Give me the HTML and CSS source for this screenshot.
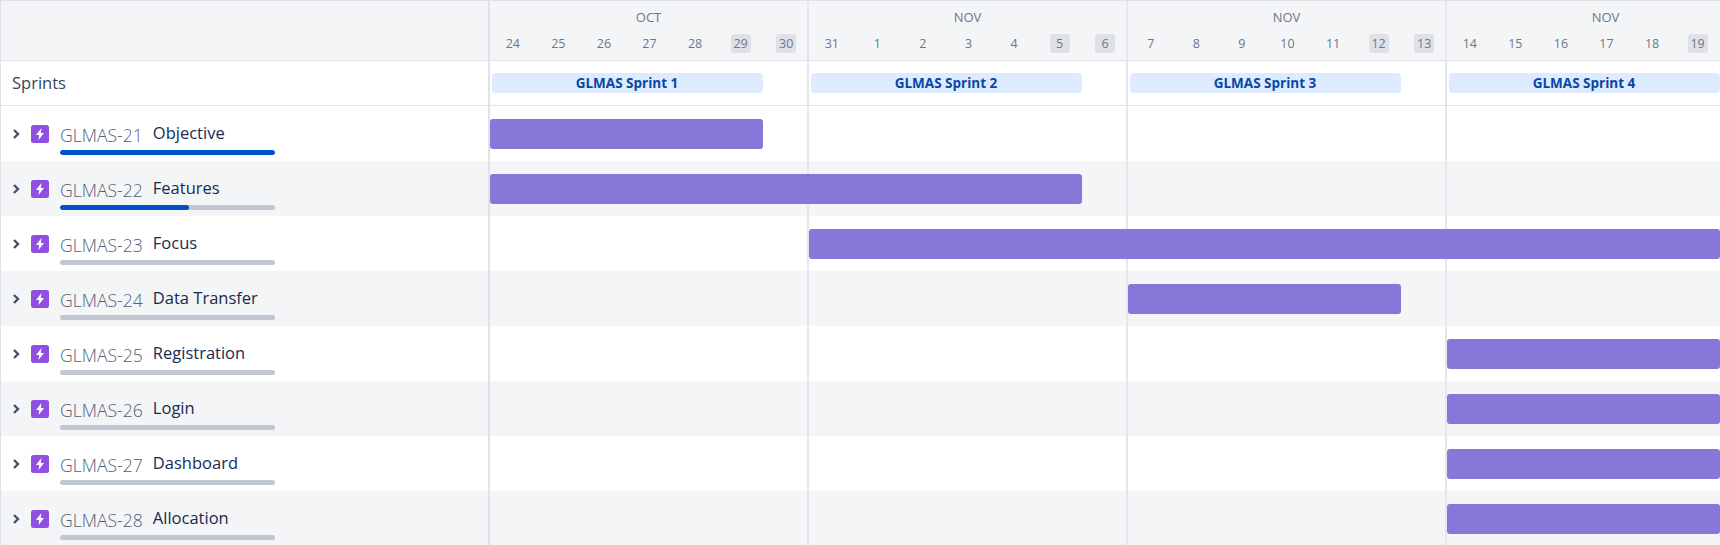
FILE: index.html
```html
<!DOCTYPE html>
<html lang="en">
<head>
<meta charset="utf-8">
<title>Timeline</title>
<link rel="stylesheet" href="styles.css">
</head>
<body>
<div class="board">
  <div class="head">
    <div class="side"></div>
    <div class="weeks">
      <div class="week"><div class="month">OCT</div><div class="days"><span>24</span><span>25</span><span>26</span><span>27</span><span>28</span><span class="off">29</span><span class="off">30</span></div></div>
      <div class="week"><div class="month">NOV</div><div class="days"><span>31</span><span>1</span><span>2</span><span>3</span><span>4</span><span class="off">5</span><span class="off">6</span></div></div>
      <div class="week"><div class="month">NOV</div><div class="days"><span>7</span><span>8</span><span>9</span><span>10</span><span>11</span><span class="off">12</span><span class="off">13</span></div></div>
      <div class="week"><div class="month">NOV</div><div class="days"><span>14</span><span>15</span><span>16</span><span>17</span><span>18</span><span class="off">19</span><span></span></div></div>
    </div>
  </div>
  <div class="sprints">
    <div class="side sprints-label">Sprints</div>
    <div class="sprint-track">
      <div class="sprint-cell"><div class="chip">GLMAS Sprint 1</div></div>
      <div class="sprint-cell"><div class="chip">GLMAS Sprint 2</div></div>
      <div class="sprint-cell"><div class="chip">GLMAS Sprint 3</div></div>
      <div class="sprint-cell"><div class="chip">GLMAS Sprint 4</div></div>
    </div>
  </div>

  <div class="row">
    <div class="side item">
      <svg class="chev" viewBox="0 0 8 12"><path d="M2 2l4 4-4 4"/></svg>
      <svg class="epic" viewBox="0 0 18 18"><rect width="18" height="18" rx="2.5"/><path d="M10.5 3L5 10h3.2L7.5 15 13 8H9.8z"/></svg>
      <div class="meta"><div class="labels"><span class="key">GLMAS-21</span><span class="name">Objective</span></div><div class="progress"><div class="fill" style="width:100%"></div></div></div>
    </div>
    <div class="track"><div class="bar" style="grid-column:1 / span 6"></div></div>
  </div>
  <div class="row alt">
    <div class="side item">
      <svg class="chev" viewBox="0 0 8 12"><path d="M2 2l4 4-4 4"/></svg>
      <svg class="epic" viewBox="0 0 18 18"><rect width="18" height="18" rx="2.5"/><path d="M10.5 3L5 10h3.2L7.5 15 13 8H9.8z"/></svg>
      <div class="meta"><div class="labels"><span class="key">GLMAS-22</span><span class="name">Features</span></div><div class="progress"><div class="fill" style="width:60%"></div></div></div>
    </div>
    <div class="track"><div class="bar" style="grid-column:1 / span 13"></div></div>
  </div>
  <div class="row">
    <div class="side item">
      <svg class="chev" viewBox="0 0 8 12"><path d="M2 2l4 4-4 4"/></svg>
      <svg class="epic" viewBox="0 0 18 18"><rect width="18" height="18" rx="2.5"/><path d="M10.5 3L5 10h3.2L7.5 15 13 8H9.8z"/></svg>
      <div class="meta"><div class="labels"><span class="key">GLMAS-23</span><span class="name">Focus</span></div><div class="progress"></div></div>
    </div>
    <div class="track"><div class="bar" style="grid-column:8 / span 20"></div></div>
  </div>
  <div class="row alt">
    <div class="side item">
      <svg class="chev" viewBox="0 0 8 12"><path d="M2 2l4 4-4 4"/></svg>
      <svg class="epic" viewBox="0 0 18 18"><rect width="18" height="18" rx="2.5"/><path d="M10.5 3L5 10h3.2L7.5 15 13 8H9.8z"/></svg>
      <div class="meta"><div class="labels"><span class="key">GLMAS-24</span><span class="name">Data Transfer</span></div><div class="progress"></div></div>
    </div>
    <div class="track"><div class="bar" style="grid-column:15 / span 6"></div></div>
  </div>
  <div class="row">
    <div class="side item">
      <svg class="chev" viewBox="0 0 8 12"><path d="M2 2l4 4-4 4"/></svg>
      <svg class="epic" viewBox="0 0 18 18"><rect width="18" height="18" rx="2.5"/><path d="M10.5 3L5 10h3.2L7.5 15 13 8H9.8z"/></svg>
      <div class="meta"><div class="labels"><span class="key">GLMAS-25</span><span class="name">Registration</span></div><div class="progress"></div></div>
    </div>
    <div class="track"><div class="bar" style="grid-column:22 / span 6"></div></div>
  </div>
  <div class="row alt">
    <div class="side item">
      <svg class="chev" viewBox="0 0 8 12"><path d="M2 2l4 4-4 4"/></svg>
      <svg class="epic" viewBox="0 0 18 18"><rect width="18" height="18" rx="2.5"/><path d="M10.5 3L5 10h3.2L7.5 15 13 8H9.8z"/></svg>
      <div class="meta"><div class="labels"><span class="key">GLMAS-26</span><span class="name">Login</span></div><div class="progress"></div></div>
    </div>
    <div class="track"><div class="bar" style="grid-column:22 / span 6"></div></div>
  </div>
  <div class="row">
    <div class="side item">
      <svg class="chev" viewBox="0 0 8 12"><path d="M2 2l4 4-4 4"/></svg>
      <svg class="epic" viewBox="0 0 18 18"><rect width="18" height="18" rx="2.5"/><path d="M10.5 3L5 10h3.2L7.5 15 13 8H9.8z"/></svg>
      <div class="meta"><div class="labels"><span class="key">GLMAS-27</span><span class="name">Dashboard</span></div><div class="progress"></div></div>
    </div>
    <div class="track"><div class="bar" style="grid-column:22 / span 6"></div></div>
  </div>
  <div class="row alt">
    <div class="side item">
      <svg class="chev" viewBox="0 0 8 12"><path d="M2 2l4 4-4 4"/></svg>
      <svg class="epic" viewBox="0 0 18 18"><rect width="18" height="18" rx="2.5"/><path d="M10.5 3L5 10h3.2L7.5 15 13 8H9.8z"/></svg>
      <div class="meta"><div class="labels"><span class="key">GLMAS-28</span><span class="name">Allocation</span></div><div class="progress"></div></div>
    </div>
    <div class="track"><div class="bar" style="grid-column:22 / span 6"></div></div>
  </div>
</div>
</body>
</html>
```

FILE: styles.css
```css
* { box-sizing: border-box; }
html, body { margin: 0; height: 100%; overflow: hidden; background: #fff; }
body { font-family: "Open Sans", "Noto Sans", sans-serif; color: #172b4d; }

.board {
  width: 1720px;
  height: 545px;
  overflow: hidden;
  border-top: 1px solid #dfe1e6;
  border-left: 1px solid #dfe1e6;
}
.side {
  flex: 0 0 489px;
  width: 489px;
  border-right: 2px solid #e1e2e8;
}
.head {
  display: flex;
  height: 59px;
  background: #f4f5f7;
}
.weeks { display: flex; flex: none; }
.week {
  flex: 0 0 319px;
  width: 319px;
  border-right: 2px solid #e6e7ec;
  text-align: center;
}
.month {
  height: 33px;
  padding-top: 7px;
  font-size: 13px;
  line-height: 18px;
  color: #6b778c;
}
.days { display: grid; grid-template-columns: repeat(7, 45.57px); margin-right: -2px; }
.days span {
  justify-self: center;
  width: 20px;
  height: 19px;
  border-radius: 3px;
  font-size: 12.5px;
  line-height: 19px;
  color: #6b778c;
}
.days .off { background: #dfe1e6; }
.sprints {
  display: flex;
  height: 46px;
  border-top: 1px solid #e1e2e8;
  border-bottom: 1px solid #e1e2e8;
}
.sprints-label {
  display: flex;
  align-items: center;
  padding: 0 0 2px 11px;
  font-size: 16.5px;
  color: #344563;
}
.sprint-track { display: flex; flex: none; }
.sprint-cell {
  flex: 0 0 319px;
  padding: 12px 0 0 1.5px;
  border-right: 2px solid #e6e7ec;
}
.chip {
  width: 271px;
  height: 20px;
  border-radius: 4px;
  background: #deebff;
  color: #0747a6;
  font-size: 13.5px;
  font-weight: 700;
  line-height: 20px;
  text-align: center;
}
.row { display: flex; height: 55px; background: #fff; }
.row.alt { background: #f4f5f7; }
.item {
  display: flex;
  align-items: flex-start;
  padding-left: 11px;
}
.chev { width: 8px; height: 12px; margin-top: 22px; fill: none; stroke: #42526e; stroke-width: 2.4; }
.epic { width: 18px; height: 18px; margin: 19px 0 0 11px; flex: none; }
.epic rect { fill: #904ee2; }
.epic path { fill: #fff; }
.meta { width: 215px; margin-left: 11px; padding-top: 14px; }
.labels { display: flex; align-items: flex-start; height: 25px; white-space: nowrap; }
.key { margin-top: 2px; font-size: 17.6px; font-weight: 300; line-height: 26px; color: #505f79; }
.name { margin-left: 10px; font-size: 16.5px; line-height: 26px; color: #172b4d; }
.progress { height: 5px; margin-top: 5px; border-radius: 3px; background: #c1c7d0; overflow: hidden; }
.fill { height: 100%; background: #0052cc; border-radius: 3px; }
.track {
  flex: none;
  display: grid;
  grid-template-columns: repeat(27, 45.57px);
  grid-template-rows: 30px;
  padding-top: 13px;
  width: 1231px;
  background: repeating-linear-gradient(to right, transparent 0, transparent 317px, #e6e7ec 317px, #e6e7ec 319px);
}
.bar {
  background: #8777d9;
  border-radius: 3px;
  height: 30px;
}
```
